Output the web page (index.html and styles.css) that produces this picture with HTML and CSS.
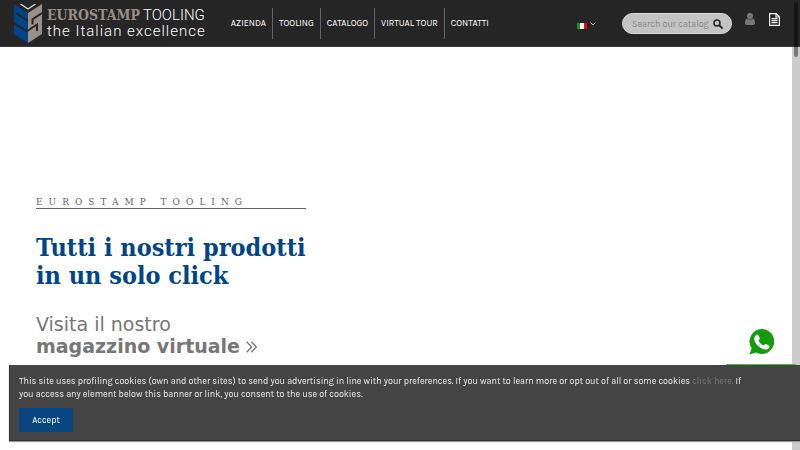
FILE: index.html
```html
<!DOCTYPE html>
<html lang="it">
<head>
<meta charset="utf-8">
<title>Eurostamp Tooling</title>
<link rel="stylesheet" href="styles.css">
</head>
<body>
<header class="header">
  <a class="logo" href="#">
    <svg class="logo-mark" viewBox="0 0 28 40" aria-hidden="true">
      <path fill="none" stroke="#ddd" stroke-width="1.300" d="M6.500 0l7.500 5 7.500-5"/>
      <path fill="#004587" d="M0 0l14 9v30L0 30z"/>
      <path fill="#9b8f87" d="M28 0v30l-14 9V9z"/>
      <path fill="none" stroke="#262626" stroke-width="2" d="M2 9l12 8M0 19l14 9M28 9l-9.500 6.200v5M14 26.500l9-6v6.500"/>
    </svg>
    <span class="logo-text">
      <span class="logo-name"><b>EUROSTAMP</b><span>TOOLING</span></span>
      <span class="logo-claim">the Italian excellence</span>
    </span>
  </a>
  <nav class="nav">
    <a href="#">AZIENDA</a><a href="#">TOOLING</a><a href="#">CATALOGO</a><a href="#">VIRTUAL TOUR</a><a href="#">CONTATTI</a>
  </nav>
  <button class="language" aria-label="Italiano">
    <span class="flag"></span>
    <svg width="6" height="4" viewBox="0 0 6 4"><path fill="none" stroke="#bbb" d="M.5.5L3 3 5.500.5"/></svg>
  </button>
  <form class="search">
    <input type="text" placeholder="Search our catalog" aria-label="Search our catalog">
    <button type="button" aria-label="Search"><svg width="10" height="10" viewBox="0 0 10 10"><circle cx="4" cy="4" r="3" fill="none" stroke="#222" stroke-width="1.500"/><path d="M6.300 6.300L9 9" stroke="#222" stroke-width="1.800" stroke-linecap="round"/></svg></button>
  </form>
  <a class="user" href="#" aria-label="Account"><svg width="10" height="12" viewBox="0 0 10 12"><path fill="#777" d="M5 0a3 3 0 0 1 3 3c0 1.500-1.200 3.300-3 3.300S2 4.500 2 3a3 3 0 0 1 3-3zM2.400 5.500a3.600 3.600 0 0 0 5.200 0C9.400 5.700 10 7.600 10 9.700c0 1.400-.8 2.300-2 2.300H2c-1.200 0-2-.9-2-2.300 0-2.100.6-4 2.400-4.200z"/></svg></a>
  <a class="quote" href="#" aria-label="Quote"><svg width="11" height="13" viewBox="0 0 11 13"><path fill="none" stroke="#f2f2f2" stroke-width="1.200" d="M.6.6h6.600l3.200 3.200v8.600H.6zM7 .6V4h3.400M2.500 5.700h6M2.500 7.700h6M2.500 9.700h6"/></svg></a>
</header>
<main class="hero">
  <div class="intro">
    <p class="eyebrow">EUROSTAMP TOOLING</p>
    <h1>Tutti i nostri prodotti<br>in un solo click</h1>
    <a class="visit" href="#">Visita il nostro<br><b>magazzino virtuale</b> <svg width="11" height="12" viewBox="0 0 11 12"><path fill="none" stroke="#777" stroke-width="1.300" d="M.7.7L5.700 6l-5 5.300M5.300.7l5 5.300-5 5.300"/></svg></a>
  </div>
</main>
<div class="page-track"></div>
<div class="page-thumb"></div>
<a class="whatsapp" href="#" aria-label="WhatsApp"><svg width="26" height="26" viewBox="0 0 26 26"><path fill="#159c0e" d="M13.300 0A12.500 12.500 0 1 1 7 23.600L.5 25.600l2.100-6.300A12.500 12.500 0 0 1 13.300 0z"/><path fill="#fff" d="M7.300 5.700c.7-.5 1.500-.3 1.900.3l1.600 3.200c.3.700-.8 1.700-1.300 2.300.8 2 2.900 4.200 5.200 5.100.7-.6 1.400-1.900 2.300-1.500l3.300 1.700c.7.400.2 2.100-.6 2.800-1.900 1.600-4.700 1-7.300-.4-3.200-1.700-5.600-4-6.700-7-.9-2.600-.4-5.200 1.600-6.500z"/></svg></a>
<div class="chat-bar"></div>
<section class="cookies" aria-label="Cookies">
  <p>This site uses profiling cookies (own and other sites) to send you advertising in line with your preferences. If you want to learn more or opt out of all or some cookies <a href="#">click here.</a> If you access any element below this banner or link, you consent to the use of cookies.</p>
  <button type="button">Accept</button>
</section>
</body>
</html>
```
FILE: styles.css
```css
* { box-sizing: border-box; }
body { margin: 0; min-height: 100vh; background: #fff; font-family: Karla, Roboto, sans-serif; overflow: hidden; }
a { color: inherit; text-decoration: none; }
svg { display: block; }
button { border: 0; padding: 0; background: none; font: inherit; }
.header { display: flex; align-items: flex-start; height: 47px; padding: 0 20px 0 14px; background: #262626; border-bottom: 1px solid #3c3c3c; color: #fff; }
.logo { display: flex; gap: 5px; padding-top: 4px; }
.logo-mark { width: 28px; height: 40px; }
.logo-text { display: flex; flex-direction: column; padding-top: 2px; white-space: nowrap; }
.logo-name { display: flex; gap: 3px; font: 15px/18px Roboto, sans-serif; }
.logo-name b { color: #9b8f87; font: bold 14px/18px "Roboto Slab", "DejaVu Serif Condensed", "DejaVu Serif", serif; }
.logo-name span { font-weight: 300; }
.logo-claim { font: 300 15px/14px Roboto, sans-serif; letter-spacing: 1px; }
.nav { display: flex; margin: 8px 0 0 19px; font-size: 9px; line-height: 31px; white-space: nowrap; }
.nav a { padding: 0 6px; border-right: 1px solid #666; }
.nav a:last-child { border: 0; }
.language { display: flex; align-items: center; gap: 3px; margin: 19px 26px 0 auto; }
.flag { width: 10px; height: 6px; margin-top: 4px; background: linear-gradient(90deg, #169b14 33%, #fff 33% 66%, #d11 66%); }
.search { display: flex; align-items: center; width: 110px; height: 21px; margin-top: 13px; padding: 0 8px 0 9px; border: 1px solid #ddd; border-radius: 11px; background: #c3c3c3; }
.search input { flex: 1; min-width: 0; padding: 0; border: 0; background: none; font: 9px Karla, Roboto, sans-serif; }
.search input::placeholder { color: #858585; }
.user { margin: 13px 14px 0 13px; }
.quote { margin-top: 13px; }
.hero { display: flex; padding: 149px 36px 0; }
.intro { color: #777; }
.eyebrow { margin: 0 0 25px; border-bottom: 1px solid #666; color: #666; font: 9px/12px "Roboto Slab", "DejaVu Serif", serif; letter-spacing: 6px; }
h1 { margin: 0 0 23px; color: #004587; font: bold 25px/28px "Roboto Slab", "DejaVu Serif Condensed", "DejaVu Serif", serif; white-space: nowrap; }
.visit { font: 19px/22px "DejaVu Sans", sans-serif; }
.visit svg { display: inline-block; }
.page-track { position: fixed; top: 47px; right: 0; bottom: 0; width: 8px; background: #ccc; }
.page-thumb { position: fixed; top: 2px; right: 2px; width: 4px; height: 55px; border-radius: 2px; background: linear-gradient(#151515 45px, #777 45px); }
.whatsapp { position: fixed; right: 25px; bottom: 95px; }
.chat-bar { position: fixed; right: 4px; bottom: 80px; width: 70px; height: 6px; background: #4bbf45; }
.cookies { position: fixed; left: 9px; right: 0; bottom: 9px; padding: 10px 50px 8px 9px; border: solid #333; border-width: 0 0 1px 1px; background: #454545; box-shadow: 0 1px 1px #999; color: #eee; font-size: 9px; line-height: 13px; }
.cookies p { margin: 0 0 7px; }
.cookies a { color: #777; }
.cookies button { width: 54px; height: 24px; background: #07467f; color: #fff; }
```
